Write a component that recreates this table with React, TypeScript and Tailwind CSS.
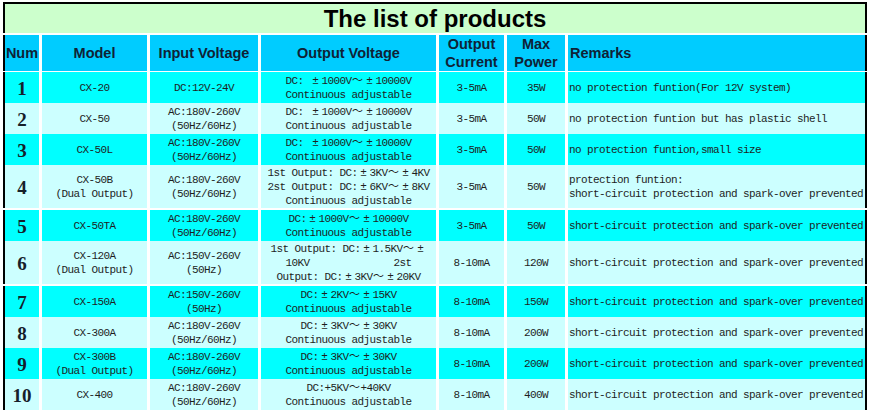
import React from "react";

type Row = {
  num: string;
  model: string[];
  input: string[];
  output: string[];
  current: string;
  power: string;
  remarks: string[];
  tall?: boolean;
};

const SHORT = "short-circuit protection and spark-over prevented";
const AC180 = ["AC:180V-260V", "(50Hz/60Hz)"];
const CONT = "Continuous adjustable";

const rows: Row[] = [
  { num: "1", model: ["CX-20"], input: ["DC:12V-24V"], output: ["DC: ±1000V～±10000V", CONT], current: "3-5mA", power: "35W", remarks: ["no protection funtion(For 12V system)"] },
  { num: "2", model: ["CX-50"], input: AC180, output: ["DC: ±1000V～±10000V", CONT], current: "3-5mA", power: "50W", remarks: ["no protection funtion but has plastic shell"] },
  { num: "3", model: ["CX-50L"], input: AC180, output: ["DC: ±1000V～±10000V", CONT], current: "3-5mA", power: "50W", remarks: ["no protection funtion,small size"] },
  {
    num: "4",
    model: ["CX-50B", "(Dual Output)"],
    input: AC180,
    output: ["1st Output: DC:±3KV～±4KV", "2st Output: DC:±6KV～±8KV", CONT],
    current: "3-5mA",
    power: "50W",
    remarks: ["protection funtion:", SHORT],
    tall: true,
  },
  { num: "5", model: ["CX-50TA"], input: AC180, output: ["DC:±1000V～±10000V", CONT], current: "3-5mA", power: "50W", remarks: [SHORT] },
  {
    num: "6",
    model: ["CX-120A", "(Dual Output)"],
    input: ["AC:150V-260V", "(50Hz)"],
    output: ["1st Output: DC:±1.5KV～±", "10KV              2st", "Output: DC:±3KV～±20KV"],
    current: "8-10mA",
    power: "120W",
    remarks: [SHORT],
    tall: true,
  },
  { num: "7", model: ["CX-150A"], input: ["AC:150V-260V", "(50Hz)"], output: ["DC:±2KV～±15KV", CONT], current: "8-10mA", power: "150W", remarks: [SHORT] },
  { num: "8", model: ["CX-300A"], input: AC180, output: ["DC:±3KV～±30KV", CONT], current: "8-10mA", power: "200W", remarks: [SHORT] },
  { num: "9", model: ["CX-300B", "(Dual Output)"], input: AC180, output: ["DC:±3KV～±30KV", CONT], current: "8-10mA", power: "200W", remarks: [SHORT] },
  { num: "10", model: ["CX-400"], input: AC180, output: ["DC:+5KV～+40KV", CONT], current: "8-10mA", power: "400W", remarks: [SHORT] },
];

const grid = "grid grid-cols-[36px_105px_108px_175px_65px_58px_299px] gap-x-[3px]";
const mono = "font-['Liberation_Mono','Noto_Sans_CJK_SC',monospace] text-[11px] tracking-[-0.6px] leading-[14px] text-[#1e1e1e] whitespace-pre";

// ± and ～ are full-width in the original font
const Line = ({ text }: { text: string }) => (
  <span>
    {text.split(/([±～])/).map((part, i) =>
      part === "±" || part === "～" ? (
        <span key={i} className="inline-block w-[12px] text-center tracking-normal">
          {part}
        </span>
      ) : (
        part
      )
    )}
  </span>
);

const Lines = ({ lines }: { lines: string[] }) => (
  <div className="flex flex-col">
    {lines.map((l, i) => (
      <Line key={i} text={l} />
    ))}
  </div>
);

export default function App() {
  return (
    <div className="w-[869px] h-[410px] overflow-hidden bg-white pt-[2px] pl-[3px]">
      <div className="flex flex-col gap-y-[2px] w-[864px]">
        <div className="h-[31px] bg-[#ccffcc] border-t-2 border-x-2 border-black flex items-center justify-center">
          <span className="font-['Liberation_Sans',Arial,sans-serif] font-bold text-[24px] leading-none text-black mt-[1px]">
            The list of products
          </span>
        </div>

        <div className={`${grid} h-[35px] font-['Liberation_Sans',Arial,sans-serif] font-bold text-[14.5px] leading-[18px] text-[#0f2236]`}>
          <div className="bg-[#00ccff] border-l-2 border-black flex items-center justify-center">Num</div>
          <div className="bg-[#00ccff] flex items-center justify-center">Model</div>
          <div className="bg-[#00ccff] flex items-center justify-center">Input Voltage</div>
          <div className="bg-[#00ccff] flex items-center justify-center">Output Voltage</div>
          <div className="bg-[#00ccff] flex flex-col items-center justify-center">
            <span>Output</span>
            <span>Current</span>
          </div>
          <div className="bg-[#00ccff] flex flex-col items-center justify-center">
            <span>Max</span>
            <span>Power</span>
          </div>
          <div className="bg-[#00ccff] border-r-2 border-black flex items-center pl-[2px]">Remarks</div>
        </div>

        {rows.map((r, i) => {
          const bg = i % 2 === 0 ? "bg-[#00ffff]" : "bg-[#ccffff]";
          return (
            <div key={r.num} className={`${grid} ${r.tall ? "h-[43px]" : "h-[29px]"}`}>
              <div className={`${bg} border-l-2 border-black flex items-center justify-center pt-[3px] font-['Liberation_Serif',serif] font-bold text-[19px] text-[#15202a]`}>
                {r.num}
              </div>
              <div className={`${bg} ${mono} flex items-center justify-center text-center`}>
                <Lines lines={r.model} />
              </div>
              <div className={`${bg} ${mono} flex items-center justify-center text-center`}>
                <Lines lines={r.input} />
              </div>
              <div className={`${bg} ${mono} flex items-center justify-center text-center`}>
                <Lines lines={r.output} />
              </div>
              <div className={`${bg} ${mono} flex items-center justify-center`}>{r.current}</div>
              <div className={`${bg} ${mono} flex items-center justify-center`}>{r.power}</div>
              <div className={`${bg} ${mono} border-r-2 border-black flex items-center pl-[1px]`}>
                <Lines lines={r.remarks} />
              </div>
            </div>
          );
        })}
      </div>
    </div>
  );
}
